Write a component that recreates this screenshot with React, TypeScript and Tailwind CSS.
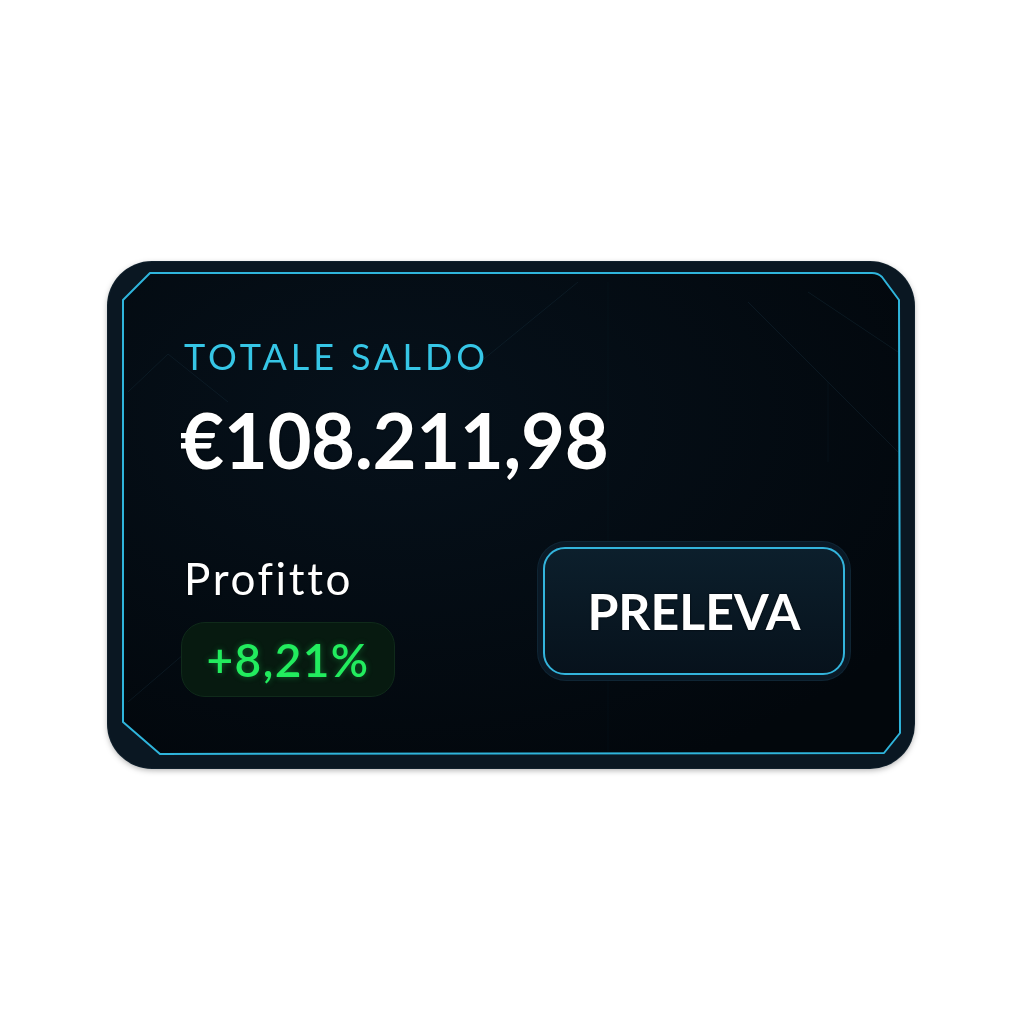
import React from 'react';

const BalanceCard: React.FC = () => {
  return (
    <div className="relative w-[806px] h-[506px] rounded-[44px] bg-[#0a1722] shadow-[0_0_0_1px_#10202c,0_2px_6px_rgba(0,0,0,0.35)]">
      {/* Frame drawing: chamfered inner border + faint grid lines */}
      <svg className="absolute inset-0" width="806" height="506" viewBox="0 0 806 506">
        <defs>
          <radialGradient id="panel" cx="35%" cy="30%" r="80%">
            <stop offset="0%" stopColor="#06111b" />
            <stop offset="100%" stopColor="#02070c" />
          </radialGradient>
        </defs>
        <path
          d="M15 38 L42 11 L764 11 Q770 11 774 15 L791 38 L792 471 L776 491 L52 492 L15 460 Z"
          fill="url(#panel)"
          stroke="#2fb5dc"
          strokeWidth="2"
          strokeLinejoin="round"
        />
        <g stroke="#1a3442" strokeWidth="1" opacity="0.35">
          <line x1="20" y1="130" x2="60" y2="92" />
          <line x1="60" y1="92" x2="120" y2="140" />
          <line x1="470" y1="20" x2="360" y2="110" />
          <line x1="700" y1="30" x2="790" y2="90" />
          <line x1="640" y1="40" x2="790" y2="190" />
          <line x1="20" y1="440" x2="90" y2="380" />
          <line x1="90" y1="380" x2="150" y2="420" />
          <line x1="500" y1="20" x2="500" y2="490" opacity="0.4" />
          <line x1="720" y1="120" x2="720" y2="200" opacity="0.6" />
        </g>
      </svg>

      <div className="relative flex h-full flex-col pl-[76px] pr-[64px] pt-[74px]">
        <div className="text-[36px] leading-[40px] tracking-[0.11em] text-[#36c6e6] font-['Lato',sans-serif]">
          TOTALE SALDO
        </div>
        <div className="mt-[24px] ml-[-4px] text-[76px] leading-[80px] font-bold tracking-[-0.005em] text-white font-['Lato',sans-serif] [text-shadow:0_0_2px_#000]">
          €108.211,98
        </div>

        <div className="mt-[86px] flex items-start justify-between">
          <div className="flex flex-col items-start">
            <div className="mt-[-12px] text-[44px] leading-[48px] font-normal tracking-[0.06em] text-white font-['Lato',sans-serif] [text-shadow:0_0_2px_#000]">
              Profitto
            </div>
            <div className="mt-[20px] ml-[-3px] flex h-[75px] w-[214px] items-center justify-center rounded-[24px] border border-[#0f2a1a] bg-[#071a10]">
              <span className="text-[46px] leading-none font-semibold tracking-[0.03em] text-[#22ec5e] font-['Lato',sans-serif] [text-shadow:0_0_6px_rgba(34,236,94,0.35)]">
                +8,21%
              </span>
            </div>
          </div>

          <div className="mt-[-24px] rounded-[28px] bg-[#0a1926] p-[5px] shadow-[0_0_0_1px_#0f2534]">
            <button className="flex h-[128px] w-[302px] items-center justify-center rounded-[22px] border-2 border-[#33b4dc] bg-gradient-to-b from-[#0c1f2c] to-[#07121c] text-[50px] font-bold text-white font-['Lato',sans-serif] [text-shadow:0_0_2px_#000]">
              PRELEVA
            </button>
          </div>
        </div>
      </div>
    </div>
  );
};

export default function App() {
  return (
    <div className="h-[1024px] w-[1024px] bg-white pl-[108px] pt-[262px]">
      <BalanceCard />
    </div>
  );
}
